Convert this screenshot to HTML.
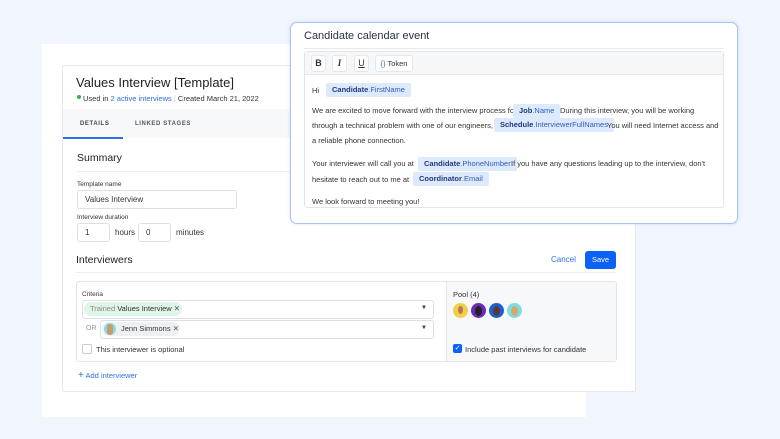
<!DOCTYPE html>
<html><head><meta charset="utf-8"><style>
*{box-sizing:border-box;margin:0;padding:0}
body{width:780px;height:439px;background:#f1f5fc;font-family:"Liberation Sans",sans-serif;color:#333;position:relative;overflow:hidden}
.a{position:absolute}
.tok{position:absolute;background:#dde9fc;color:#2c5dba;font-size:7.5px;height:14px;line-height:14px;padding:0 6px;border-radius:2px;white-space:nowrap}
.tok b{color:#1e3a7a}
.t{position:absolute;font-size:8px;color:#333;white-space:nowrap}
.m{font-size:7.5px}
.btn{position:absolute;top:55px;height:17px;background:#fff;border:1px solid #e3e6ea;border-radius:3px;font-size:9px;text-align:center;line-height:15px;font-weight:bold}
.in{position:absolute;background:#fff;border:1px solid #dcdfe3;border-radius:3px;font-size:8px;line-height:17px;padding-left:7px;height:19px}
.av{position:absolute;top:303px;width:15px;height:15px;border-radius:50%}
</style></head><body>
<div class="a" style="left:42px;top:44px;width:544px;height:373px;background:#fff"></div>
<div class="a" style="left:62px;top:65px;width:574px;height:327px;background:#fff;border:1px solid #e6e8eb;border-radius:2px"></div>
<div class="a" style="left:76px;top:75px;font-size:13px;color:#222">Values Interview [Template]</div>
<div class="a" style="left:77px;top:95px;width:4px;height:4px;border-radius:50%;background:#2fb44f"></div>
<div class="t" style="left:83px;top:94px;font-size:7.5px">Used in <span style="color:#2f6fe4">2 active interviews</span> <span style="color:#ccc">|</span> Created March 21, 2022</div>
<div class="a" style="left:63px;top:109px;width:572px;height:29px;background:#f7f8f9"></div>
<div class="t" style="left:80px;top:121px;font-size:6px;font-weight:bold;letter-spacing:.6px;color:#444">DETAILS</div>
<div class="t" style="left:135px;top:121px;font-size:6px;font-weight:bold;letter-spacing:.6px;color:#555">LINKED STAGES</div>
<div class="a" style="left:63px;top:137px;width:60px;height:2px;background:#2f6fe4"></div>
<div class="t" style="left:77px;top:152px;font-size:10.5px;color:#222">Summary</div>
<div class="a" style="left:77px;top:171px;width:520px;height:1px;background:#eceef0"></div>
<div class="t" style="left:77px;top:181px;font-size:6.5px">Template name</div>
<div class="in" style="left:77px;top:190px;width:160px">Values Interview</div>
<div class="t" style="left:77px;top:214px;font-size:6.5px">Interview duration</div>
<div class="in" style="left:77px;top:223px;width:33px">1</div>
<div class="t" style="left:115px;top:228px">hours</div>
<div class="in" style="left:138px;top:223px;width:33px">0</div>
<div class="t" style="left:176px;top:228px">minutes</div>
<div class="t" style="left:76px;top:254px;font-size:10.5px;color:#222">Interviewers</div>
<div class="t" style="left:551px;top:255px;color:#2f6fe4">Cancel</div>
<div class="a" style="left:585px;top:251px;width:31px;height:18px;background:#0b62f5;border-radius:3px;color:#fff;font-size:7.5px;text-align:center;line-height:18px">Save</div>
<div class="a" style="left:76px;top:272px;width:540px;height:1px;background:#eceef0"></div>
<div class="a" style="left:76px;top:281px;width:541px;height:81px;border:1px solid #e3e5e8;border-radius:3px;background:#fff"></div>
<div class="a" style="left:446px;top:282px;width:170px;height:79px;background:#f7f8f9;border-left:1px solid #e3e5e8"></div>
<div class="t" style="left:82px;top:291px;font-size:6.5px">Criteria</div>
<div class="in" style="left:82px;top:300px;width:352px;padding:0"></div>
<div class="a" style="left:84px;top:302px;width:98px;height:14px;background:#dff5e6;border-radius:8px;font-size:7.5px;line-height:14px;padding-left:6px;white-space:nowrap"><span style="color:#888">Trained</span> Values Interview <span style="color:#555">✕</span></div>
<div class="t" style="left:421px;top:305px;font-size:6px">▼</div>
<div class="t" style="left:86px;top:325px;font-size:7px;color:#999">OR</div>
<div class="in" style="left:100px;top:320px;width:334px;padding:0"></div>
<div class="a" style="left:102px;top:322px;width:78px;height:14px;background:#eef0f2;border-radius:8px;font-size:7.5px;line-height:14px;padding-left:19px;white-space:nowrap">Jenn Simmons <span style="color:#555">✕</span></div>
<div class="a" style="left:104px;top:323px;width:12px;height:12px;border-radius:50%;background:#7fdde4"></div>
<div class="a" style="left:107px;top:324px;width:6px;height:11px;border-radius:3px;background:#c99a6b"></div>
<div class="t" style="left:421px;top:325px;font-size:6px">▼</div>
<div class="a" style="left:82px;top:344px;width:10px;height:10px;border:1px solid #ccc;border-radius:2px;background:#fff"></div>
<div class="t" style="left:96px;top:345px;font-size:7.5px">This interviewer is optional</div>
<div class="t" style="left:453px;top:290px;font-size:7.5px">Pool (4)</div>
<div class="av" style="left:453px;background:#f2cf4a"></div><div class="av" style="left:458px;top:306px;width:5px;height:8px;background:#b57a55"></div>
<div class="av" style="left:471px;background:#6b2bb8"></div><div class="av" style="left:475px;top:306px;width:7px;height:10px;background:#222"></div>
<div class="av" style="left:489px;background:#1e5fd8"></div><div class="av" style="left:493px;top:306px;width:7px;height:10px;background:#5a3a2a"></div>
<div class="av" style="left:507px;background:#7fdde4"></div><div class="av" style="left:511px;top:306px;width:7px;height:10px;background:#d9a86e"></div>
<div class="a" style="left:453px;top:344px;width:9px;height:9px;background:#0b62f5;border-radius:2px;color:#fff;font-size:7px;line-height:9px;text-align:center">✓</div>
<div class="t" style="left:465px;top:345px;font-size:7.5px">Include past interviews for candidate</div>
<div class="t" style="left:78px;top:370px;color:#2f6fe4;font-size:7.5px"><span style="font-size:10px">+</span> Add interviewer</div>

<div class="a" style="left:290px;top:22px;width:448px;height:202px;background:#fff;border:1.5px solid #a9c3f5;border-radius:7px;box-shadow:0 0 3px rgba(120,160,240,.3)"></div>
<div class="t" style="left:304px;top:30px;font-size:11px;color:#2a3340">Candidate calendar event</div>
<div class="a" style="left:304px;top:48px;width:420px;height:1px;background:#e6e8eb"></div>
<div class="a" style="left:304px;top:51px;width:420px;height:157px;border:1px solid #e3e5e8;border-radius:3px;background:#fff"></div>
<div class="a" style="left:305px;top:52px;width:418px;height:23px;background:#f6f7f8;border-bottom:1px solid #e6e8eb"></div>
<div class="btn" style="left:311px;width:15px">B</div>
<div class="btn" style="left:332px;width:15px;font-style:italic;font-family:'Liberation Serif',serif">I</div>
<div class="btn" style="left:354px;width:15px;text-decoration:underline;font-weight:normal">U</div>
<div class="btn" style="left:375px;width:38px;font-weight:normal;font-size:7.5px"><span style="color:#2f6fe4">{}</span> Token</div>
<div class="t m" style="left:312px;top:86px">Hi</div>
<div class="tok" style="left:326px;top:83px"><b>Candidate</b>.FirstName</div>
<div class="t m" style="left:312px;top:106px">We are excited to move forward with the interview process for</div>
<div class="tok" style="left:513px;top:104px"><b>Job</b>.Name</div>
<div class="t m" style="left:560px;top:106px">During this interview, you will be working</div>
<div class="t m" style="left:312px;top:121px">through a technical problem with one of our engineers,</div>
<div class="tok" style="left:494px;top:118px"><b>Schedule</b>.InterviewerFullNames</div>
<div class="t m" style="left:607px;top:121px">You will need Internet access and</div>
<div class="t m" style="left:312px;top:136px">a reliable phone connection.</div>
<div class="t m" style="left:312px;top:159px">Your interviewer will call you at</div>
<div class="tok" style="left:418px;top:157px"><b>Candidate</b>.PhoneNumber</div>
<div class="t m" style="left:511px;top:159px">If you have any questions leading up to the interview, don't</div>
<div class="t m" style="left:312px;top:175px">hesitate to reach out to me at</div>
<div class="tok" style="left:413px;top:172px"><b>Coordinator</b>.Email</div>
<div class="t m" style="left:312px;top:197px">We look forward to meeting you!</div>
</body></html>
